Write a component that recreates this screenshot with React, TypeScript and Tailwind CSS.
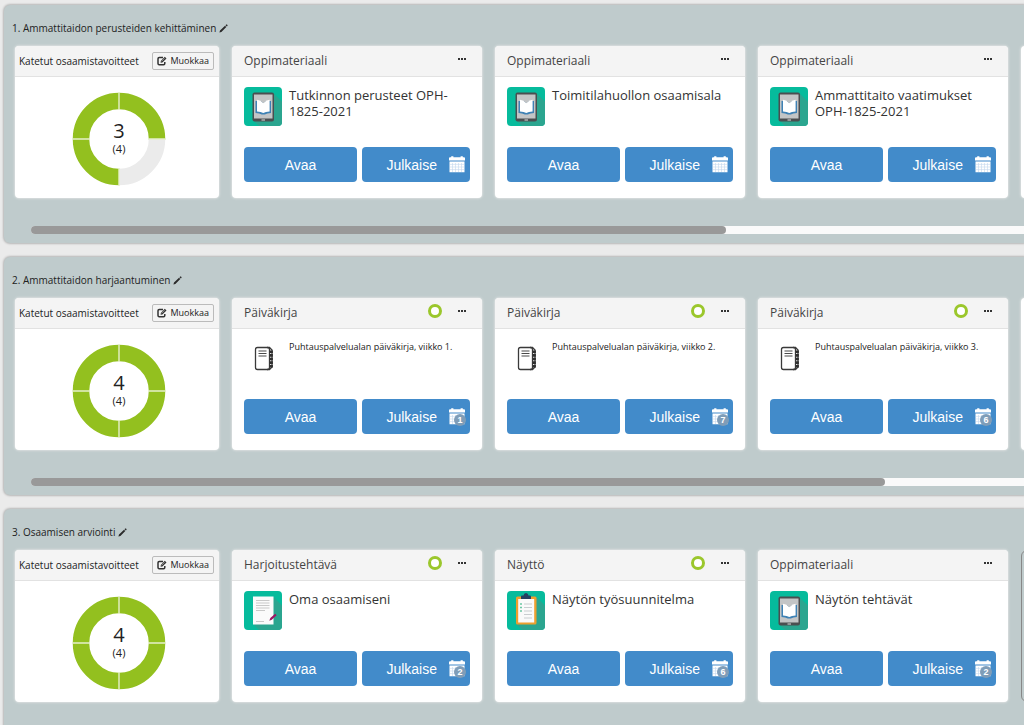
import type { ReactNode } from "react";

type IconKind = "tablet" | "diary" | "paper" | "clipboard";

interface Material {
  kind: string;
  title: string;
  icon: IconKind;
  ring?: boolean;
  badge?: number;
}

interface SectionData {
  title: string;
  covered: number;
  total: number;
  cards: Material[];
  thumb?: string;
  addSlot?: boolean;
}

const sections: SectionData[] = [
  {
    title: "1. Ammattitaidon perusteiden kehittäminen",
    covered: 3,
    total: 4,
    thumb: "w-[70%]",
    cards: [
      { kind: "Oppimateriaali", title: "Tutkinnon perusteet OPH-1825-2021", icon: "tablet" },
      { kind: "Oppimateriaali", title: "Toimitilahuollon osaamisala", icon: "tablet" },
      { kind: "Oppimateriaali", title: "Ammattitaito vaatimukset OPH-1825-2021", icon: "tablet" },
    ],
  },
  {
    title: "2. Ammattitaidon harjaantuminen",
    covered: 4,
    total: 4,
    thumb: "w-[86%]",
    cards: [
      { kind: "Päiväkirja", title: "Puhtauspalvelualan päiväkirja, viikko 1.", icon: "diary", ring: true, badge: 1 },
      { kind: "Päiväkirja", title: "Puhtauspalvelualan päiväkirja, viikko 2.", icon: "diary", ring: true, badge: 7 },
      { kind: "Päiväkirja", title: "Puhtauspalvelualan päiväkirja, viikko 3.", icon: "diary", ring: true, badge: 6 },
    ],
  },
  {
    title: "3. Osaamisen arviointi",
    covered: 4,
    total: 4,
    addSlot: true,
    cards: [
      { kind: "Harjoitustehtävä", title: "Oma osaamiseni", icon: "paper", ring: true, badge: 2 },
      { kind: "Näyttö", title: "Näytön työsuunnitelma", icon: "clipboard", ring: true, badge: 6 },
      { kind: "Oppimateriaali", title: "Näytön tehtävät", icon: "tablet", badge: 2 },
    ],
  },
];

function PencilIcon() {
  return (
    <svg width="9" height="9" viewBox="0 0 9 9" aria-hidden="true">
      <path d="M0.4 8.6 1 6.6 6 1.7 7.3 3 2.4 8Z M6.5 1.2 7.1.6Q7.5.2 8 .6L8.4 1Q8.8 1.5 8.4 2L7.8 2.5Z" fill="#2b2b2b" />
    </svg>
  );
}

function EditIcon() {
  return (
    <svg width="10" height="10" viewBox="0 0 10 10" fill="none" aria-hidden="true">
      <path d="M6 1.5H2.2Q1 1.5 1 2.7V7.6Q1 8.8 2.2 8.8H6.6Q7.8 8.8 7.8 7.6V6" stroke="#333" strokeWidth="1.5" />
      <path d="M3.6 6.7 3.8 4.9 7.8.8 9.5 2.4 5.4 6.5Z" fill="#333" />
      <path d="M4.6 5.4 7.6 2.3" stroke="#ddd" strokeWidth=".5" />
    </svg>
  );
}

function CalendarIcon({ badge }: { badge?: number }) {
  return (
    <span className="relative block h-[17px] w-4">
      <svg width="16" height="17" viewBox="0 0 16 17" aria-hidden="true">
        <path d="M0 2.2Q0 1.2 1 1.2H2.2V.3H4.4V1.2H11.6V.3H13.8V1.2H15Q16 1.2 16 2.2V4.4H0Z" fill="#fff" />
        <path d="M.5 5.6H15.5V16.2H.5Z" fill="#fff" />
        <path d="M3.5 7V16M6.5 7V16M9.5 7V16M12.5 7V16M1 8.4H15M1 11H15M1 13.6H15" stroke="#c4d9ee" strokeWidth=".6" />
      </svg>
      {badge !== undefined && (
        <span className="absolute -right-px -bottom-px flex size-3 items-center justify-center rounded-full bg-[#7f9db8] text-[9px] leading-none font-bold text-white">
          {badge}
        </span>
      )}
    </span>
  );
}

function Tile({ children }: { children: ReactNode }) {
  return (
    <svg className="shrink-0" width="38" height="39" viewBox="0 0 38 39" aria-hidden="true">
      <rect width="38" height="39" rx="4" fill="#06bb9c" />
      {children}
    </svg>
  );
}

function MaterialIcon({ icon }: { icon: IconKind }) {
  if (icon === "diary") {
    return (
      <svg className="shrink-0" width="38" height="39" viewBox="0 0 38 39" fill="none" aria-hidden="true">
        <rect x="11.5" y="8.5" width="14" height="22" rx="2" stroke="#3a3a3a" strokeWidth="1.3" />
        <path d="M14.5 12H22.5M14.5 14.5H22.5M14.5 17H22.5" stroke="#4a4a4a" strokeWidth="1.2" />
        <path d="M23 8.5H25.5L28 11V28L25.5 30.5H23" stroke="#3a3a3a" strokeWidth="1.3" />
        <path d="M27.3 11.5V28.5" stroke="#2f2f2f" strokeWidth="3.2" strokeDasharray="2.6 1" />
      </svg>
    );
  }
  if (icon === "paper") {
    return (
      <Tile>
        <path d="M29.5 6 38 14.5V35Q38 39 34 39H15L9 33Z" fill="#2ba58f" />
        <rect x="9" y="5.5" width="20.5" height="28" fill="#fbfbfb" />
        <path d="M12 9.5H25.5M12 12H25.5M12 14.5H25.5M12 17H25.5M12 19.5H21M12 30.5H20" stroke="#c9c9c9" strokeWidth="1.2" />
        <path d="M25.3 29.8 26.3 27 31.2 22.7 32.6 24.2 27.8 28.7Z" fill="#a01463" />
      </Tile>
    );
  }
  if (icon === "clipboard") {
    return (
      <Tile>
        <path d="M29.5 6 38 14.5V35Q38 39 34 39H15L9 33Z" fill="#2ba58f" />
        <rect x="9" y="5.5" width="20.5" height="28" rx="1.5" fill="#ee9f2e" />
        <rect x="11.2" y="8" width="16" height="23.5" fill="#fafafa" />
        <path d="M17 13H25M17 16.5H25M17 20H25M17 23.5H25M17 27H25" stroke="#c9cdd0" strokeWidth="1.2" />
        <path d="M13 13H15M13 16.5H15M13 20H15" stroke="#6cc7a4" strokeWidth="1.4" />
        <path d="M14 8V5.5Q14 4.5 15 4.5H16.5Q16.8 2 19 2 21.2 2 21.5 4.5H23Q24 4.5 24 5.5V8Z" fill="#243f60" />
      </Tile>
    );
  }
  return (
    <Tile>
      <path d="M29 6 38 14.5V35Q38 39 34 39H15L10 34Z" fill="#2ba58f" />
      <rect x="8.5" y="5.5" width="21.5" height="29" rx="2" fill="#4b4e50" />
      <rect x="10" y="7.5" width="18.5" height="24" fill="#c3c5c6" />
      <path d="M11.5 14H27V26Q23 26 20.8 27.6H17.8Q15.5 26 11.5 26Z" fill="#3f82b5" />
      <path d="M13 12.8Q17 13.2 19.3 16 21.5 13.2 25.6 12.8V24.6Q21.5 24.8 19.3 26 17 24.8 13 24.6Z" fill="#fff" />
      <path d="M16.3 13.8 19.3 16.2 22.3 13.8Z" fill="#c3c5c6" />
      <path d="M17.5 33H21" stroke="#ddd" strokeWidth="1" />
    </Tile>
  );
}

function Donut({ covered, total }: { covered: number; total: number }) {
  const radius = 38;
  const point = (fraction: number) => {
    const angle = fraction * 2 * Math.PI;
    return `${47 + radius * Math.sin(angle)} ${47 - radius * Math.cos(angle)}`;
  };
  // Uncovered goals occupy the second quarter, so the fill order skips it first.
  const empty = total - covered;
  return (
    <div className="grid place-items-center">
      <svg className="col-start-1 row-start-1" width="94" height="94" viewBox="0 0 94 94" fill="none" aria-hidden="true">
        {Array.from({ length: total }, (_, i) => (
          <path
            key={i}
            d={`M${point(i / total)}A${radius} ${radius} 0 0 1 ${point((i + 1) / total)}`}
            stroke={i >= 1 && i < 1 + empty ? "#ebebeb" : "#93c01f"}
            strokeWidth="16.5"
          />
        ))}
        <path d="M47 0V18M47 76V94M0 47H18M76 47H94" stroke="#e6f0cb" strokeWidth="1.4" />
      </svg>
      <p className="col-start-1 row-start-1 flex flex-col items-center text-[#222]">
        <span className="text-xl leading-5">{covered}</span>
        <span className="text-[11px] leading-4">({total})</span>
      </p>
    </div>
  );
}

const cardClass = "flex h-[152px] shrink-0 flex-col overflow-hidden rounded bg-white shadow-[0_0_2px_1px_#d9dede]";
const headerClass = "flex h-[31px] shrink-0 items-center border-b border-[#e2e2e2] bg-[#f4f4f4] text-[#444]";
const actionClass = "h-[35px] rounded bg-[#428bca] font-['Liberation_Sans',sans-serif] text-sm text-white";

function GoalsCard({ covered, total }: { covered: number; total: number }) {
  return (
    <article className={`${cardClass} w-[204px]`}>
      <header className={`${headerClass} justify-between pr-[5px] pl-1`}>
        <h3 className="text-[10px] whitespace-nowrap text-[#222]">Katetut osaamistavoitteet</h3>
        <button type="button" className="flex h-[18px] items-center gap-1 rounded-xs border border-[#bbb] px-1 text-[9px] text-[#222]">
          <EditIcon />
          Muokkaa
        </button>
      </header>
      <div className="flex grow items-center justify-center pt-0.5 pl-1">
        <Donut covered={covered} total={total} />
      </div>
    </article>
  );
}

function MaterialCard({ item }: { item: Material }) {
  return (
    <article className={`${cardClass} w-[250px]`}>
      <header className={`${headerClass} gap-4 pr-4 pl-3`}>
        <h3 className="grow pb-px text-xs">{item.kind}</h3>
        {item.ring && <span className="mb-1 size-[14px] rounded-full border-3 border-[#9bc72c] bg-white" />}
        <button type="button" aria-label="Lisää toimintoja" className="mb-1 flex h-3 items-center gap-px">
          <span className="size-[2px] bg-[#333]" />
          <span className="size-[2px] bg-[#333]" />
          <span className="size-[2px] bg-[#333]" />
        </button>
      </header>
      <div className="flex grow gap-[7px] pt-[10px] pr-3 pl-3">
        <MaterialIcon icon={item.icon} />
        <h4 className={item.icon === "diary" ? "text-[9px] leading-4 whitespace-nowrap text-[#222]" : "text-[13px] leading-4 text-[#333]"}>
          {item.title}
        </h4>
      </div>
      <div className="flex gap-[5px] px-3 pb-4">
        <button type="button" className={`${actionClass} w-[113px]`}>
          Avaa
        </button>
        <button type="button" className={`${actionClass} flex grow items-center justify-end gap-3 pr-[5px]`}>
          Julkaise
          <CalendarIcon badge={item.badge} />
        </button>
      </div>
    </article>
  );
}

function Section({ section }: { section: SectionData }) {
  return (
    <section className="flex flex-col overflow-hidden rounded-l-md bg-[#bfcbcc] pt-[15px] pb-[9px] shadow-[0_0_2px_1px_#b8b8b8]">
      <div className="flex items-center gap-[3px] pl-2">
        <h2 className="text-[10px] leading-4 text-[#222]">{section.title}</h2>
        <button type="button" aria-label="Muokkaa otsikkoa">
          <PencilIcon />
        </button>
      </div>
      <div className="flex gap-[13px] overflow-hidden pt-[10px] pb-7 pl-[11px]">
        <GoalsCard covered={section.covered} total={section.total} />
        {section.cards.map((item) => (
          <MaterialCard key={item.title} item={item} />
        ))}
        {section.addSlot ? (
          <div className="h-[152px] w-[250px] shrink-0 rounded-md border border-[#888]" />
        ) : (
          <div className={`${cardClass} w-[250px]`} />
        )}
      </div>
      <div className="ml-[27px] h-2 rounded-l-full bg-[#fafafa]">
        {section.thumb && <div className={`${section.thumb} h-2 rounded-full bg-[#999]`} />}
      </div>
    </section>
  );
}

export default function App() {
  return (
    <main className="flex h-screen flex-col gap-[14px] overflow-y-auto bg-[#ebebeb] pt-[5px] pl-1 font-['Open_Sans','Noto_Sans',sans-serif] [scrollbar-width:none] *:shrink-0">
      {sections.map((section) => (
        <Section key={section.title} section={section} />
      ))}
    </main>
  );
}
